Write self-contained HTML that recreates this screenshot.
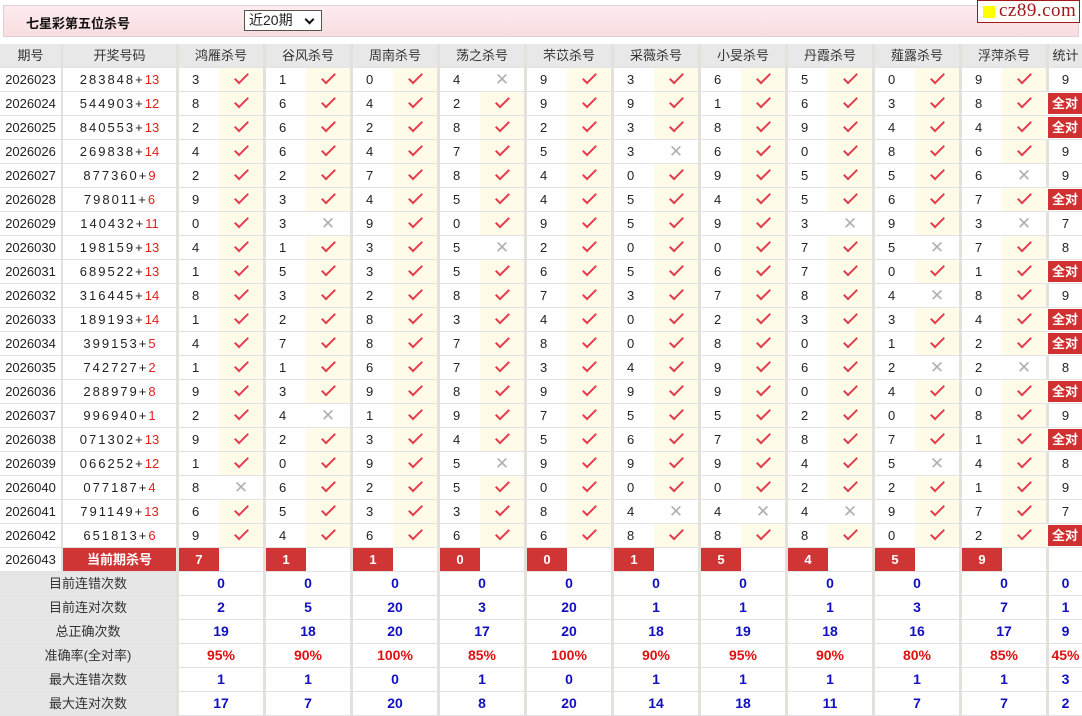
<!DOCTYPE html>
<html><head><meta charset="utf-8"><style>
*{box-sizing:border-box;margin:0;padding:0}
body{width:1082px;height:715px;background:#fff;font-family:"Liberation Sans","Noto Sans CJK SC",sans-serif;font-size:13px;color:#222;position:relative;overflow:hidden}
.top{position:absolute;left:3px;top:5px;width:1076px;height:32px;background:linear-gradient(#fdecee,#f8dde0);border:1px solid #e3cfd1}
.top b{position:absolute;left:22px;top:7px;font-size:13px;color:#111}
.sel{position:absolute;left:240px;top:4px;width:78px;height:21px;border:1px solid #555;background:#fff;font-size:14px;padding-left:4px;line-height:19px}
.sel:after{content:"";position:absolute;right:8px;top:5px;width:5px;height:5px;border:solid #111;border-width:0 2px 2px 0;transform:rotate(45deg)}
.logo{position:absolute;left:977px;top:0;width:103px;height:23px;background:#fff;border:1px solid #a01818;font-family:"Liberation Serif",serif;font-size:19px;color:#a01818;line-height:20px;padding-left:21px;letter-spacing:0.5px;overflow:hidden;white-space:nowrap}
.logo:before{content:"";position:absolute;left:5px;top:5px;width:12px;height:12px;background:#ff0}
.tb{position:absolute;left:0;top:44px;width:1082px}
.r{display:flex;height:24px;border-bottom:1px solid #e2e2e2}
.r>div{height:23px;line-height:23px;text-align:center;white-space:nowrap}
.q{width:61px}
.k{width:115px;border-left:2px solid #e0e0e0;letter-spacing:2px}
.k i{font-style:normal;color:#e02020;letter-spacing:0}
.n{width:43px;border-left:3px solid #e4e1da;text-align:left!important;padding-left:13px}
.c{width:44px;background:#fffbe9}
.c.w{background:#fff}
.t{width:36px;border-left:3px solid #e4e1da}
.h>div{background:#e8e8e8;color:#333}
.h .n{width:87px;text-align:center!important;padding-left:0}
.y{display:inline-block;width:7px;height:14px;border:solid #e63a4e;border-width:0 2px 2px 0;transform:rotate(45deg);vertical-align:top;margin-top:2px}
.x{color:#b0b0b0;font-size:17px}
.qd{background:#d03030;color:#fff;font-weight:bold;margin:0 1px}
.t.qd{width:34px;margin:1px 0 0 2px;height:21px!important;line-height:21px!important;border:0}
.cur .k{background:#d03535;color:#fff;font-weight:bold;letter-spacing:0}
.cur .n{background:#d03535;color:#fff;font-weight:bold;text-align:center!important;padding-left:0}
.s .lb{width:176px;background:#e6e6e6;color:#333}
.s .g{width:87px;border-left:3px solid #e4e1da;color:#1010c0;font-weight:bold;font-size:14px}
.s .t{color:#1010c0;font-weight:bold;font-size:14px}
.s.p .g,.s.p .t{color:#e01010}
</style></head><body>
<div class="top"><b>七星彩第五位杀号</b><div class="sel">近20期</div></div>
<div class="logo">cz89.com</div>
<div class="tb">
<div class="r h"><div class="q">期号</div><div class="k" style="letter-spacing:0">开奖号码</div><div class="n">鸿雁杀号</div><div class="n">谷风杀号</div><div class="n">周南杀号</div><div class="n">荡之杀号</div><div class="n">芣苡杀号</div><div class="n">采薇杀号</div><div class="n">小旻杀号</div><div class="n">丹霞杀号</div><div class="n">薤露杀号</div><div class="n">浮萍杀号</div><div class="t">统计</div></div>

<div class="r"><div class="q">2026023</div><div class="k">283848+<i>13</i></div><div class="n">3</div><div class="c"><span class="y"></span></div><div class="n">1</div><div class="c"><span class="y"></span></div><div class="n">0</div><div class="c"><span class="y"></span></div><div class="n">4</div><div class="c w"><span class="x">✕</span></div><div class="n">9</div><div class="c"><span class="y"></span></div><div class="n">3</div><div class="c"><span class="y"></span></div><div class="n">6</div><div class="c"><span class="y"></span></div><div class="n">5</div><div class="c"><span class="y"></span></div><div class="n">0</div><div class="c"><span class="y"></span></div><div class="n">9</div><div class="c"><span class="y"></span></div><div class="t">9</div></div>

<div class="r"><div class="q">2026024</div><div class="k">544903+<i>12</i></div><div class="n">8</div><div class="c"><span class="y"></span></div><div class="n">6</div><div class="c"><span class="y"></span></div><div class="n">4</div><div class="c"><span class="y"></span></div><div class="n">2</div><div class="c"><span class="y"></span></div><div class="n">9</div><div class="c"><span class="y"></span></div><div class="n">9</div><div class="c"><span class="y"></span></div><div class="n">1</div><div class="c"><span class="y"></span></div><div class="n">6</div><div class="c"><span class="y"></span></div><div class="n">3</div><div class="c"><span class="y"></span></div><div class="n">8</div><div class="c"><span class="y"></span></div><div class="t qd">全对</div></div>

<div class="r"><div class="q">2026025</div><div class="k">840553+<i>13</i></div><div class="n">2</div><div class="c"><span class="y"></span></div><div class="n">6</div><div class="c"><span class="y"></span></div><div class="n">2</div><div class="c"><span class="y"></span></div><div class="n">8</div><div class="c"><span class="y"></span></div><div class="n">2</div><div class="c"><span class="y"></span></div><div class="n">3</div><div class="c"><span class="y"></span></div><div class="n">8</div><div class="c"><span class="y"></span></div><div class="n">9</div><div class="c"><span class="y"></span></div><div class="n">4</div><div class="c"><span class="y"></span></div><div class="n">4</div><div class="c"><span class="y"></span></div><div class="t qd">全对</div></div>

<div class="r"><div class="q">2026026</div><div class="k">269838+<i>14</i></div><div class="n">4</div><div class="c"><span class="y"></span></div><div class="n">6</div><div class="c"><span class="y"></span></div><div class="n">4</div><div class="c"><span class="y"></span></div><div class="n">7</div><div class="c"><span class="y"></span></div><div class="n">5</div><div class="c"><span class="y"></span></div><div class="n">3</div><div class="c w"><span class="x">✕</span></div><div class="n">6</div><div class="c"><span class="y"></span></div><div class="n">0</div><div class="c"><span class="y"></span></div><div class="n">8</div><div class="c"><span class="y"></span></div><div class="n">6</div><div class="c"><span class="y"></span></div><div class="t">9</div></div>

<div class="r"><div class="q">2026027</div><div class="k">877360+<i>9</i></div><div class="n">2</div><div class="c"><span class="y"></span></div><div class="n">2</div><div class="c"><span class="y"></span></div><div class="n">7</div><div class="c"><span class="y"></span></div><div class="n">8</div><div class="c"><span class="y"></span></div><div class="n">4</div><div class="c"><span class="y"></span></div><div class="n">0</div><div class="c"><span class="y"></span></div><div class="n">9</div><div class="c"><span class="y"></span></div><div class="n">5</div><div class="c"><span class="y"></span></div><div class="n">5</div><div class="c"><span class="y"></span></div><div class="n">6</div><div class="c w"><span class="x">✕</span></div><div class="t">9</div></div>

<div class="r"><div class="q">2026028</div><div class="k">798011+<i>6</i></div><div class="n">9</div><div class="c"><span class="y"></span></div><div class="n">3</div><div class="c"><span class="y"></span></div><div class="n">4</div><div class="c"><span class="y"></span></div><div class="n">5</div><div class="c"><span class="y"></span></div><div class="n">4</div><div class="c"><span class="y"></span></div><div class="n">5</div><div class="c"><span class="y"></span></div><div class="n">4</div><div class="c"><span class="y"></span></div><div class="n">5</div><div class="c"><span class="y"></span></div><div class="n">6</div><div class="c"><span class="y"></span></div><div class="n">7</div><div class="c"><span class="y"></span></div><div class="t qd">全对</div></div>

<div class="r"><div class="q">2026029</div><div class="k">140432+<i>11</i></div><div class="n">0</div><div class="c"><span class="y"></span></div><div class="n">3</div><div class="c w"><span class="x">✕</span></div><div class="n">9</div><div class="c"><span class="y"></span></div><div class="n">0</div><div class="c"><span class="y"></span></div><div class="n">9</div><div class="c"><span class="y"></span></div><div class="n">5</div><div class="c"><span class="y"></span></div><div class="n">9</div><div class="c"><span class="y"></span></div><div class="n">3</div><div class="c w"><span class="x">✕</span></div><div class="n">9</div><div class="c"><span class="y"></span></div><div class="n">3</div><div class="c w"><span class="x">✕</span></div><div class="t">7</div></div>

<div class="r"><div class="q">2026030</div><div class="k">198159+<i>13</i></div><div class="n">4</div><div class="c"><span class="y"></span></div><div class="n">1</div><div class="c"><span class="y"></span></div><div class="n">3</div><div class="c"><span class="y"></span></div><div class="n">5</div><div class="c w"><span class="x">✕</span></div><div class="n">2</div><div class="c"><span class="y"></span></div><div class="n">0</div><div class="c"><span class="y"></span></div><div class="n">0</div><div class="c"><span class="y"></span></div><div class="n">7</div><div class="c"><span class="y"></span></div><div class="n">5</div><div class="c w"><span class="x">✕</span></div><div class="n">7</div><div class="c"><span class="y"></span></div><div class="t">8</div></div>

<div class="r"><div class="q">2026031</div><div class="k">689522+<i>13</i></div><div class="n">1</div><div class="c"><span class="y"></span></div><div class="n">5</div><div class="c"><span class="y"></span></div><div class="n">3</div><div class="c"><span class="y"></span></div><div class="n">5</div><div class="c"><span class="y"></span></div><div class="n">6</div><div class="c"><span class="y"></span></div><div class="n">5</div><div class="c"><span class="y"></span></div><div class="n">6</div><div class="c"><span class="y"></span></div><div class="n">7</div><div class="c"><span class="y"></span></div><div class="n">0</div><div class="c"><span class="y"></span></div><div class="n">1</div><div class="c"><span class="y"></span></div><div class="t qd">全对</div></div>

<div class="r"><div class="q">2026032</div><div class="k">316445+<i>14</i></div><div class="n">8</div><div class="c"><span class="y"></span></div><div class="n">3</div><div class="c"><span class="y"></span></div><div class="n">2</div><div class="c"><span class="y"></span></div><div class="n">8</div><div class="c"><span class="y"></span></div><div class="n">7</div><div class="c"><span class="y"></span></div><div class="n">3</div><div class="c"><span class="y"></span></div><div class="n">7</div><div class="c"><span class="y"></span></div><div class="n">8</div><div class="c"><span class="y"></span></div><div class="n">4</div><div class="c w"><span class="x">✕</span></div><div class="n">8</div><div class="c"><span class="y"></span></div><div class="t">9</div></div>

<div class="r"><div class="q">2026033</div><div class="k">189193+<i>14</i></div><div class="n">1</div><div class="c"><span class="y"></span></div><div class="n">2</div><div class="c"><span class="y"></span></div><div class="n">8</div><div class="c"><span class="y"></span></div><div class="n">3</div><div class="c"><span class="y"></span></div><div class="n">4</div><div class="c"><span class="y"></span></div><div class="n">0</div><div class="c"><span class="y"></span></div><div class="n">2</div><div class="c"><span class="y"></span></div><div class="n">3</div><div class="c"><span class="y"></span></div><div class="n">3</div><div class="c"><span class="y"></span></div><div class="n">4</div><div class="c"><span class="y"></span></div><div class="t qd">全对</div></div>

<div class="r"><div class="q">2026034</div><div class="k">399153+<i>5</i></div><div class="n">4</div><div class="c"><span class="y"></span></div><div class="n">7</div><div class="c"><span class="y"></span></div><div class="n">8</div><div class="c"><span class="y"></span></div><div class="n">7</div><div class="c"><span class="y"></span></div><div class="n">8</div><div class="c"><span class="y"></span></div><div class="n">0</div><div class="c"><span class="y"></span></div><div class="n">8</div><div class="c"><span class="y"></span></div><div class="n">0</div><div class="c"><span class="y"></span></div><div class="n">1</div><div class="c"><span class="y"></span></div><div class="n">2</div><div class="c"><span class="y"></span></div><div class="t qd">全对</div></div>

<div class="r"><div class="q">2026035</div><div class="k">742727+<i>2</i></div><div class="n">1</div><div class="c"><span class="y"></span></div><div class="n">1</div><div class="c"><span class="y"></span></div><div class="n">6</div><div class="c"><span class="y"></span></div><div class="n">7</div><div class="c"><span class="y"></span></div><div class="n">3</div><div class="c"><span class="y"></span></div><div class="n">4</div><div class="c"><span class="y"></span></div><div class="n">9</div><div class="c"><span class="y"></span></div><div class="n">6</div><div class="c"><span class="y"></span></div><div class="n">2</div><div class="c w"><span class="x">✕</span></div><div class="n">2</div><div class="c w"><span class="x">✕</span></div><div class="t">8</div></div>

<div class="r"><div class="q">2026036</div><div class="k">288979+<i>8</i></div><div class="n">9</div><div class="c"><span class="y"></span></div><div class="n">3</div><div class="c"><span class="y"></span></div><div class="n">9</div><div class="c"><span class="y"></span></div><div class="n">8</div><div class="c"><span class="y"></span></div><div class="n">9</div><div class="c"><span class="y"></span></div><div class="n">9</div><div class="c"><span class="y"></span></div><div class="n">9</div><div class="c"><span class="y"></span></div><div class="n">0</div><div class="c"><span class="y"></span></div><div class="n">4</div><div class="c"><span class="y"></span></div><div class="n">0</div><div class="c"><span class="y"></span></div><div class="t qd">全对</div></div>

<div class="r"><div class="q">2026037</div><div class="k">996940+<i>1</i></div><div class="n">2</div><div class="c"><span class="y"></span></div><div class="n">4</div><div class="c w"><span class="x">✕</span></div><div class="n">1</div><div class="c"><span class="y"></span></div><div class="n">9</div><div class="c"><span class="y"></span></div><div class="n">7</div><div class="c"><span class="y"></span></div><div class="n">5</div><div class="c"><span class="y"></span></div><div class="n">5</div><div class="c"><span class="y"></span></div><div class="n">2</div><div class="c"><span class="y"></span></div><div class="n">0</div><div class="c"><span class="y"></span></div><div class="n">8</div><div class="c"><span class="y"></span></div><div class="t">9</div></div>

<div class="r"><div class="q">2026038</div><div class="k">071302+<i>13</i></div><div class="n">9</div><div class="c"><span class="y"></span></div><div class="n">2</div><div class="c"><span class="y"></span></div><div class="n">3</div><div class="c"><span class="y"></span></div><div class="n">4</div><div class="c"><span class="y"></span></div><div class="n">5</div><div class="c"><span class="y"></span></div><div class="n">6</div><div class="c"><span class="y"></span></div><div class="n">7</div><div class="c"><span class="y"></span></div><div class="n">8</div><div class="c"><span class="y"></span></div><div class="n">7</div><div class="c"><span class="y"></span></div><div class="n">1</div><div class="c"><span class="y"></span></div><div class="t qd">全对</div></div>

<div class="r"><div class="q">2026039</div><div class="k">066252+<i>12</i></div><div class="n">1</div><div class="c"><span class="y"></span></div><div class="n">0</div><div class="c"><span class="y"></span></div><div class="n">9</div><div class="c"><span class="y"></span></div><div class="n">5</div><div class="c w"><span class="x">✕</span></div><div class="n">9</div><div class="c"><span class="y"></span></div><div class="n">9</div><div class="c"><span class="y"></span></div><div class="n">9</div><div class="c"><span class="y"></span></div><div class="n">4</div><div class="c"><span class="y"></span></div><div class="n">5</div><div class="c w"><span class="x">✕</span></div><div class="n">4</div><div class="c"><span class="y"></span></div><div class="t">8</div></div>

<div class="r"><div class="q">2026040</div><div class="k">077187+<i>4</i></div><div class="n">8</div><div class="c w"><span class="x">✕</span></div><div class="n">6</div><div class="c"><span class="y"></span></div><div class="n">2</div><div class="c"><span class="y"></span></div><div class="n">5</div><div class="c"><span class="y"></span></div><div class="n">0</div><div class="c"><span class="y"></span></div><div class="n">0</div><div class="c"><span class="y"></span></div><div class="n">0</div><div class="c"><span class="y"></span></div><div class="n">2</div><div class="c"><span class="y"></span></div><div class="n">2</div><div class="c"><span class="y"></span></div><div class="n">1</div><div class="c"><span class="y"></span></div><div class="t">9</div></div>

<div class="r"><div class="q">2026041</div><div class="k">791149+<i>13</i></div><div class="n">6</div><div class="c"><span class="y"></span></div><div class="n">5</div><div class="c"><span class="y"></span></div><div class="n">3</div><div class="c"><span class="y"></span></div><div class="n">3</div><div class="c"><span class="y"></span></div><div class="n">8</div><div class="c"><span class="y"></span></div><div class="n">4</div><div class="c w"><span class="x">✕</span></div><div class="n">4</div><div class="c w"><span class="x">✕</span></div><div class="n">4</div><div class="c w"><span class="x">✕</span></div><div class="n">9</div><div class="c"><span class="y"></span></div><div class="n">7</div><div class="c"><span class="y"></span></div><div class="t">7</div></div>

<div class="r"><div class="q">2026042</div><div class="k">651813+<i>6</i></div><div class="n">9</div><div class="c"><span class="y"></span></div><div class="n">4</div><div class="c"><span class="y"></span></div><div class="n">6</div><div class="c"><span class="y"></span></div><div class="n">6</div><div class="c"><span class="y"></span></div><div class="n">6</div><div class="c"><span class="y"></span></div><div class="n">8</div><div class="c"><span class="y"></span></div><div class="n">8</div><div class="c"><span class="y"></span></div><div class="n">8</div><div class="c"><span class="y"></span></div><div class="n">0</div><div class="c"><span class="y"></span></div><div class="n">2</div><div class="c"><span class="y"></span></div><div class="t qd">全对</div></div>

<div class="r cur"><div class="q">2026043</div><div class="k">当前期杀号</div><div class="n">7</div><div class="c w"></div><div class="n">1</div><div class="c w"></div><div class="n">1</div><div class="c w"></div><div class="n">0</div><div class="c w"></div><div class="n">0</div><div class="c w"></div><div class="n">1</div><div class="c w"></div><div class="n">5</div><div class="c w"></div><div class="n">4</div><div class="c w"></div><div class="n">5</div><div class="c w"></div><div class="n">9</div><div class="c w"></div><div class="t"></div></div>

<div class="r s"><div class="lb">目前连错次数</div><div class="g">0</div><div class="g">0</div><div class="g">0</div><div class="g">0</div><div class="g">0</div><div class="g">0</div><div class="g">0</div><div class="g">0</div><div class="g">0</div><div class="g">0</div><div class="t">0</div></div>
<div class="r s"><div class="lb">目前连对次数</div><div class="g">2</div><div class="g">5</div><div class="g">20</div><div class="g">3</div><div class="g">20</div><div class="g">1</div><div class="g">1</div><div class="g">1</div><div class="g">3</div><div class="g">7</div><div class="t">1</div></div>
<div class="r s"><div class="lb">总正确次数</div><div class="g">19</div><div class="g">18</div><div class="g">20</div><div class="g">17</div><div class="g">20</div><div class="g">18</div><div class="g">19</div><div class="g">18</div><div class="g">16</div><div class="g">17</div><div class="t">9</div></div>
<div class="r s p"><div class="lb">准确率(全对率)</div><div class="g">95%</div><div class="g">90%</div><div class="g">100%</div><div class="g">85%</div><div class="g">100%</div><div class="g">90%</div><div class="g">95%</div><div class="g">90%</div><div class="g">80%</div><div class="g">85%</div><div class="t">45%</div></div>
<div class="r s"><div class="lb">最大连错次数</div><div class="g">1</div><div class="g">1</div><div class="g">0</div><div class="g">1</div><div class="g">0</div><div class="g">1</div><div class="g">1</div><div class="g">1</div><div class="g">1</div><div class="g">1</div><div class="t">3</div></div>
<div class="r s"><div class="lb">最大连对次数</div><div class="g">17</div><div class="g">7</div><div class="g">20</div><div class="g">8</div><div class="g">20</div><div class="g">14</div><div class="g">18</div><div class="g">11</div><div class="g">7</div><div class="g">7</div><div class="t">2</div></div>
</div>
</body></html>
